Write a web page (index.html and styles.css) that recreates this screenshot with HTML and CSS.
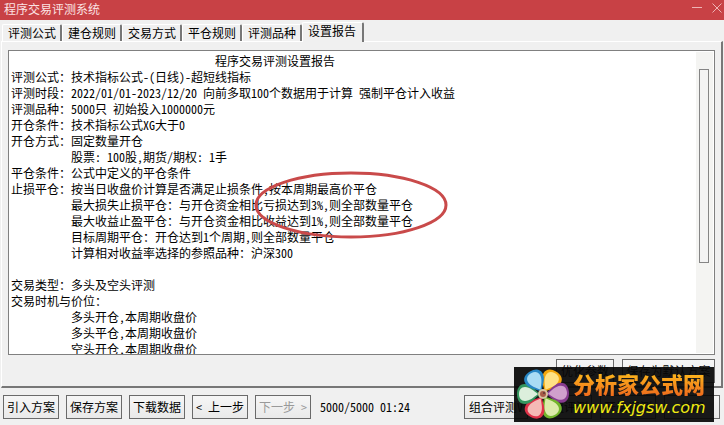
FILE: index.html
```html
<!DOCTYPE html>
<html lang="zh-CN">

<head>
    <meta charset="UTF-8">
    <meta name="viewport" content="width=device-width, initial-scale=1.0">
    <title>程序交易评测系统</title>
    <link rel="stylesheet" href="styles.css">
</head>

<body>
    <header class="title-bar">
        <h1>程序交易评测系统</h1>
        <div class="window-controls">
            <button type="button" aria-label="最小化">
                <svg width="10" height="10" viewBox="0 0 10 10"><path d="M0 4.5H10" /></svg>
            </button>
            <button type="button" aria-label="关闭窗口">
                <svg width="10" height="10" viewBox="0 0 10 10"><path d="M0.5 0.5L9.5 9.5M9.5 0.5L0.5 9.5" /></svg>
            </button>
        </div>
    </header>

    <nav class="tabs">
        <button type="button">评测公式</button>
        <button type="button">建仓规则</button>
        <button type="button">交易方式</button>
        <button type="button">平仓规则</button>
        <button type="button">评测品种</button>
        <button type="button" class="active">设置报告</button>
    </nav>

    <main class="panel">
        <div class="report">
            <textarea class="report-text" aria-label="设置报告" readonly>
                                  程序交易评测设置报告
评测公式：技术指标公式-(日线)-超短线指标
评测时段：2022/01/01-2023/12/20 向前多取100个数据用于计算 强制平仓计入收益
评测品种：5000只 初始投入1000000元
开仓条件：技术指标公式XG大于0
开仓方式：固定数量开仓
          股票: 100股，期货/期权: 1手
平仓条件：公式中定义的平仓条件
止损平仓：按当日收盘价计算是否满足止损条件,按本周期最高价平仓
          最大损失止损平仓：与开仓资金相比亏损达到3%,则全部数量平仓
          最大收益止盈平仓：与开仓资金相比收益达到1%,则全部数量平仓
          目标周期平仓：开仓达到1个周期,则全部数量平仓
          计算相对收益率选择的参照品种：沪深300

交易类型：多头及空头评测
交易时机与价位：
          多头开仓,本周期收盘价
          多头平仓,本周期收盘价
          空头开仓,本周期收盘价</textarea>
            <div class="scrollbar">
                <div class="thumb"></div>
            </div>
            <svg class="mark" width="194" height="68" viewBox="0 0 194 68">
                <ellipse cx="97" cy="34" rx="95" ry="32" />
            </svg>
        </div>
        <div class="panel-actions">
            <button type="button">优化参数</button>
            <button type="button">保存为默认方案</button>
        </div>
    </main>

    <footer class="actions">
        <button type="button">引入方案</button>
        <button type="button">保存方案</button>
        <button type="button">下载数据</button>
        <button type="button">&lt; 上一步</button>
        <button type="button" disabled>下一步 &gt;</button>
        <span class="status">5000/5000 01:24</span>
        <div class="actions-right">
            <button type="button">组合评测V</button>
            <button type="button">分组评测</button>
            <button type="button">开始评测</button>
            <button type="button">关闭</button>
        </div>
    </footer>

    <a class="watermark" href="#">
        <svg class="flower" width="54" height="54" viewBox="0 0 54 54">
            <defs>
                <path id="petal" d="M0 -3C-4 -8 -10 -12 -10 -18C-10 -24 -5 -26 0 -26C5 -26 10 -24 10 -18C10 -12 4 -8 0 -3Z" />
                <path id="inner" d="M0 -5C-3 -9 -7 -13 -7 -18C-7 -22 -4 -24 0 -24C4 -24 7 -22 7 -18C7 -13 3 -9 0 -5Z" />
            </defs>
            <g transform="translate(27 26)">
                <use href="#petal" fill="#f4a60c" transform="rotate(30)" />
                <use href="#petal" fill="#873b8f" transform="rotate(86)" />
                <use href="#petal" fill="#72b52c" transform="rotate(150)" />
                <use href="#petal" fill="#de3148" transform="rotate(208)" />
                <use href="#petal" fill="#35965f" transform="rotate(270)" />
                <use href="#petal" fill="#2786c5" transform="rotate(330)" />
                <use href="#inner" fill="#ffe184" transform="rotate(30)" />
                <use href="#inner" fill="#d0a0cc" transform="rotate(86)" />
                <use href="#inner" fill="#dcebab" transform="rotate(150)" />
                <use href="#inner" fill="#f5b9b5" transform="rotate(208)" />
                <use href="#inner" fill="#dcefdc" transform="rotate(270)" />
                <use href="#inner" fill="#a9dcf4" transform="rotate(330)" />
                <circle r="5" fill="#d7c4a1" />
                <circle r="3" fill="#a85b48" />
                <circle cx="1" cy="-1" r="1" fill="#5b3a36" />
            </g>
        </svg>
        <span class="watermark-text">
            <strong>分析家公式网</strong>
            <em>www.fxjgsw.com</em>
        </span>
    </a>
</body>

</html>
```
FILE: styles.css
```css
* {
    box-sizing: border-box;
}

body {
    margin: 0;
    height: 100vh;
    display: flex;
    flex-direction: column;
    overflow: hidden;
    background-color: #f0f0f0;
    color: #000;
    font-family: "Noto Sans CJK SC", sans-serif;
    font-size: 12px;
    line-height: 16px;
    font-feature-settings: "hwid";
}

button,
textarea {
    font: inherit;
    font-feature-settings: inherit;
    color: inherit;
    margin: 0;
}

button {
    white-space: nowrap;
}

.title-bar {
    display: flex;
    justify-content: space-between;
    height: 20px;
    padding: 0 2px 0 4px;
    background-color: #c84145;
    color: #fbe3e3;
}

.title-bar h1 {
    margin: 0;
    font-size: 12px;
    font-weight: normal;
    line-height: 18px;
}

.window-controls {
    display: flex;
    gap: 10px;
    padding-top: 3px;
}

.window-controls button {
    width: 10px;
    height: 10px;
    padding: 0;
    border: none;
    background: none;
}

.window-controls svg {
    display: block;
    fill: none;
    stroke: #eeb4b5;
}

.tabs {
    display: flex;
    align-items: flex-end;
    height: 21px;
    padding-left: 2px;
}

.tabs button {
    width: 60px;
    height: 17px;
    padding: 0 5px;
    border: 1px solid #fff;
    border-right: 2px solid #777;
    border-bottom: none;
    border-radius: 2px 2px 0 0;
    background: none;
    line-height: 16px;
    text-align: left;
}

.tabs .active {
    position: relative;
    width: 62px;
    height: 20px;
    margin-bottom: -1px;
    padding-bottom: 3px;
    background-color: #f0f0f0;
}

.panel {
    flex: 1;
    display: flex;
    flex-direction: column;
    min-height: 0;
    margin: 0 1px;
    padding: 8px 6px 3px;
    border: 1px solid #fff;
    border-right: 2px solid #777;
    border-bottom: 2px solid #777;
}

.report {
    position: relative;
    flex: 1;
    display: flex;
    min-height: 0;
    border: 1px solid #808080;
    background-color: #fff;
}

.report-text {
    flex: 1;
    min-width: 0;
    padding: 2px 2px 0;
    border: none;
    outline: none;
    resize: none;
    overflow: hidden;
    background: none;
    white-space: pre;
}

.scrollbar {
    width: 17px;
    margin: 1px;
    padding: 17px 2px 90px 3px;
    background-color: #f4f4f2;
}

.thumb {
    width: 10px;
    height: 100%;
    border: 1px solid #858585;
    background-color: #f3f3f3;
}

/* highlighted stop conditions */
.mark {
    position: absolute;
    left: 245px;
    top: 120px;
    fill: none;
    stroke: #c94a4a;
    stroke-width: 3px;
}

.panel-actions {
    display: flex;
    justify-content: flex-end;
    gap: 8px;
    padding-top: 4px;
}

.panel-actions button,
.actions button {
    height: 24px;
    padding: 0 3px;
    border: 1px solid #6a6a6a;
    background: linear-gradient(#f6f6f6, #e9e9e9);
}

.panel-actions button {
    min-width: 58px;
}

.panel-actions button:last-child {
    min-width: 93px;
}

.actions {
    display: flex;
    align-items: center;
    gap: 7px;
    height: 37px;
    padding: 0 4px 0 3px;
}

.actions button {
    width: 56px;
}

.actions button:disabled {
    color: #999;
}

.status {
    padding-left: 2px;
    white-space: nowrap;
}

.actions-right {
    display: flex;
    gap: 8px;
    margin-left: auto;
}

.actions-right button:first-child {
    width: 64px;
}

.watermark {
    position: absolute;
    right: 10px;
    bottom: 3px;
    display: flex;
    align-items: center;
    width: 200px;
    height: 55px;
    padding-left: 2px;
    background-color: rgba(8, 8, 8, 0.93);
    text-decoration: none;
}

.watermark-text {
    display: flex;
    flex-direction: column;
    padding-left: 3px;
}

.watermark strong {
    background: linear-gradient(#ffc31c, #ef6a1c);
    -webkit-background-clip: text;
    background-clip: text;
    color: transparent;
    font-size: 22px;
    font-weight: 900;
    line-height: 26px;
}

.watermark em {
    color: #f0ea12;
    font-family: "DejaVu Sans", sans-serif;
    font-size: 16px;
    line-height: 24px;
}
```
